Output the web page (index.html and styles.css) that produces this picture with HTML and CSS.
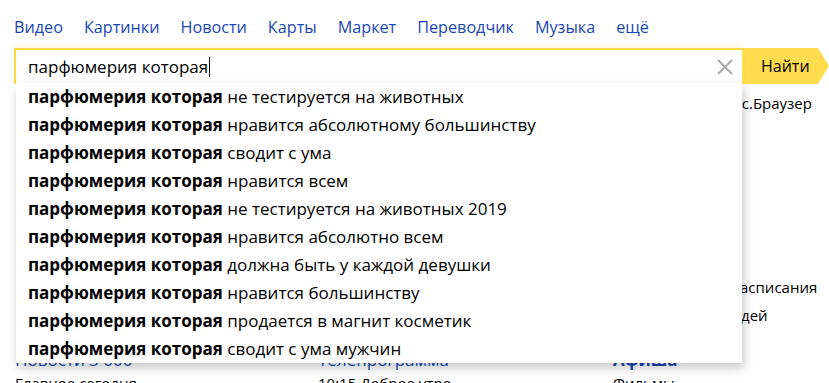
FILE: index.html
```html
<!DOCTYPE html>
<html lang="ru">
<head>
<meta charset="utf-8">
<link rel="stylesheet" href="styles.css">
</head>
<body>
<nav class="tabs">
  <a>Видео</a><a>Картинки</a><a>Новости</a><a>Карты</a><a>Маркет</a><a>Переводчик</a><a>Музыка</a><a>ещё</a>
</nav>
<div class="search">
  <div class="input">
    <span class="query">парфюмерия которая</span><span class="caret"></span>
    <svg class="clear" width="16" height="16" viewBox="0 0 16 16"><path d="M1 1L15 15M15 1L1 15" stroke="#a6a6a6" stroke-width="1.8" fill="none"/></svg>
  </div>
  <button class="go"><span>Найти</span></button>
  <ul class="suggest">
    <li><b>парфюмерия которая</b> не тестируется на животных</li>
    <li><b>парфюмерия которая</b> нравится абсолютному большинству</li>
    <li><b>парфюмерия которая</b> сводит с ума</li>
    <li><b>парфюмерия которая</b> нравится всем</li>
    <li><b>парфюмерия которая</b> не тестируется на животных 2019</li>
    <li><b>парфюмерия которая</b> нравится абсолютно всем</li>
    <li><b>парфюмерия которая</b> должна быть у каждой девушки</li>
    <li><b>парфюмерия которая</b> нравится большинству</li>
    <li><b>парфюмерия которая</b> продается в магнит косметик</li>
    <li><b>парфюмерия которая</b> сводит с ума мужчин</li>
  </ul>
</div>
<main class="page">
  <div class="side">
    <p class="browser">Яндекс.Браузер</p>
    <p class="sched">Расписания</p>
    <p class="people">Для людей</p>
  </div>
  <div class="cols">
    <div class="col">
      <h3>Новости 3 000</h3>
      <p>Главное сегодня</p>
    </div>
    <div class="col">
      <h3>Телепрограмма</h3>
      <p>10:15 Доброе утро</p>
    </div>
    <div class="col">
      <h3 class="bold">Афиша</h3>
      <p>Фильмы</p>
    </div>
  </div>
</main>
</body>
</html>
```
FILE: styles.css
```css
html, body {
  margin: 0;
  padding: 0;
  background: #fff;
  font-family: "Open Sans", "Noto Sans", sans-serif;
  color: #000;
  overflow: hidden;
  width: 829px;
  height: 383px;
}
.tabs {
  display: flex;
  gap: 21px;
  padding: 15px 0 0 14px;
  height: 48px;
  box-sizing: border-box;
  font-size: 16.2px;
  line-height: 24px;
}
.tabs a {
  color: #1a46b6;
}
.search {
  position: relative;
  display: flex;
  margin-left: 14px;
  height: 36px;
  z-index: 2;
}
.input {
  width: 728px;
  box-sizing: border-box;
  border-top: 2px solid #fed942;
  border-left: 2px solid #fed942;
  border-bottom: 1px solid #e6e6e6;
  box-shadow: 0 -3px 4px rgba(255, 219, 77, 0.18);
  display: flex;
  align-items: center;
  padding-left: 12px;
  font-size: 17px;
  background: #fff;
}
.caret {
  width: 1px;
  height: 20px;
  background: #000;
  margin-left: 1px;
}
.clear {
  margin-left: auto;
  margin-right: 9px;
}
.go {
  position: relative;
  width: 76px;
  height: 36px;
  border: 0;
  padding: 0 0 0 19px;
  text-align: left;
  background: #ffdb4d;
  font-family: inherit;
  font-size: 16px;
  color: #000;
}
.go::after {
  content: "";
  position: absolute;
  left: 76px;
  top: 0;
  border-top: 18px solid transparent;
  border-bottom: 18px solid transparent;
  border-left: 11px solid #ffdb4d;
}
.suggest {
  position: absolute;
  left: 2px;
  top: 35px;
  width: 726px;
  margin: 0;
  padding: 0;
  list-style: none;
  background: #fff;
  box-shadow: 2px 5px 10px rgba(0,0,0,0.22);
  font-size: 17px;
}
.suggest li {
  height: 28px;
  line-height: 28px;
  padding-left: 12px;
}
.suggest b {
  font-weight: 700;
}
.page {
  display: grid;
  grid-template-columns: 1fr 140px;
  padding-left: 15px;
  font-size: 15px;
}
.side {
  grid-column: 2;
  grid-row: 1;
  padding-top: 8px;
}
.side p {
  margin: 0 0 6px;
  line-height: 22px;
}
.side p.browser {
  padding-left: 9px;
}
.side p.sched {
  margin-top: 162px;
  padding-left: 42px;
}
.cols {
  grid-column: 1;
  grid-row: 1;
  display: grid;
  grid-template-columns: 303px 295px 1fr;
  padding-top: 265px;
}
.col h3 {
  margin: 0;
  font-size: 17px;
  font-weight: 400;
  color: #1a46b6;
  line-height: 22px;
}
.col h3.bold { font-weight: 700; }
.col p { margin: 1px 0 0; line-height: 22px; }
```
